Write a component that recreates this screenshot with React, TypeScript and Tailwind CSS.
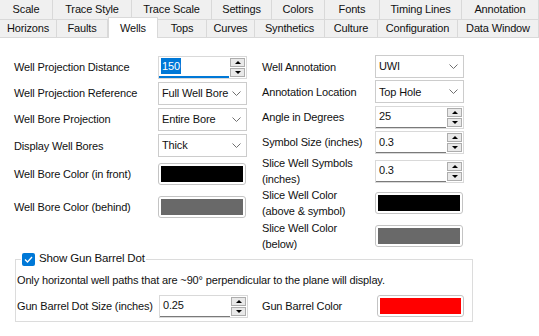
import clsx from "clsx";

const TOP_TABS = [
  { label: "Scale", w: "w-[53px]" },
  { label: "Trace Style", w: "w-[79px]" },
  { label: "Trace Scale", w: "w-[80px]" },
  { label: "Settings", w: "w-[60px]" },
  { label: "Colors", w: "w-[53px]" },
  { label: "Fonts", w: "w-[55px]" },
  { label: "Timing Lines", w: "w-[82px]" },
  { label: "Annotation", w: "w-[77px]" },
];

const BOTTOM_TABS = [
  { label: "Horizons", w: "w-[57px]" },
  { label: "Faults", w: "w-[51px]" },
  { label: "Wells", w: "w-[50px]", active: true },
  { label: "Tops", w: "w-[49px]" },
  { label: "Curves", w: "w-[48px]" },
  { label: "Synthetics", w: "w-[70px]" },
  { label: "Culture", w: "w-[53px]" },
  { label: "Configuration", w: "w-[80px]" },
  { label: "Data Window", w: "w-[81px]" },
];

const Arrow = ({ up }: { up?: boolean }) => (
  <div
    className={clsx(
      "h-0 w-0 border-x-[3px] border-x-transparent",
      up ? "border-b-[3px] border-b-black" : "border-t-[3px] border-t-black"
    )}
  />
);

const SpinButton = ({ up }: { up?: boolean }) => (
  <div className="flex h-[9px] w-[15px] items-center justify-center border border-[#adadad] bg-[#e9e9e9]">
    <Arrow up={up} />
  </div>
);

const NumericBox = ({ value, focused }: { value: string; focused?: boolean }) => (
  <div className="flex h-[23px] w-[89px] border border-[#d9d9d9] bg-white">
    <div
      className={clsx(
        "flex flex-1 items-center pl-[2px]",
        focused ? "border-b-2 border-[#0078d7]" : "border-b border-[#7a7a7a]"
      )}
    >
      {focused ? <span className="bg-[#0078d7] px-px text-white">{value}</span> : <span className="pl-px">{value}</span>}
    </div>
    <div className="flex flex-col justify-center gap-px px-px">
      <SpinButton up />
      <SpinButton />
    </div>
  </div>
);

const ComboBox = ({ value }: { value: string }) => (
  <div className="flex h-[23px] w-[89px] items-center justify-between border border-[#cccccc] bg-white pl-[3px] pr-[5px]">
    <span className="whitespace-nowrap">{value}</span>
    <svg width="9" height="5" viewBox="0 0 9 5" className="shrink-0">
      <path d="M0.5 0.5 L4.5 4.5 L8.5 0.5" stroke="#707070" fill="none" strokeWidth="1" />
    </svg>
  </div>
);

const ColorBox = ({ fill, w = "w-[88px]" }: { fill: string; w?: string }) => (
  <div className={clsx("h-[22px] rounded-[3px] border border-[#c4c4c4] bg-white p-[2px]", w)}>
    <div className={clsx("h-full w-full", fill)} />
  </div>
);

const Row = ({ label, h, lw, children }: { label: React.ReactNode; h: string; lw: string; children: React.ReactNode }) => (
  <div className={clsx("flex items-center", h)}>
    <div className={clsx("shrink-0 leading-[16px]", lw)}>{label}</div>
    {children}
  </div>
);

export default function App() {
  return (
    <div className="h-[336px] w-[539px] overflow-hidden bg-white font-['Liberation_Sans',Arial,sans-serif] text-[11px] tracking-[-0.15px] text-[#111]">
      {/* tab strip */}
      <div className="bg-white">
        <div className="flex h-[20px]">
          {TOP_TABS.map((t) => (
            <div
              key={t.label}
              className={clsx(
                "flex shrink-0 items-center justify-center border-r border-b border-[#d9d9d9] bg-[#f0f0f0]",
                t.w
              )}
            >
              {t.label}
            </div>
          ))}
        </div>
        <div className="flex h-[18px] items-end">
          {BOTTOM_TABS.map((t) =>
            t.active ? (
              <div
                key={t.label}
                className={clsx(
                  "relative z-10 flex h-[21px] shrink-0 items-start justify-center border-x border-t border-[#d9d9d9] bg-white pt-[2px]",
                  t.w
                )}
              >
                {t.label}
              </div>
            ) : (
              <div
                key={t.label}
                className={clsx(
                  "flex h-[18px] shrink-0 items-center justify-center border-r border-b border-[#d9d9d9] bg-[#f0f0f0]",
                  t.w
                )}
              >
                {t.label}
              </div>
            )
          )}
        </div>
      </div>

      {/* form columns */}
      <div className="flex h-[214px] pl-[14px] pt-[16px]">
        <div className="flex w-[233px] flex-col">
          <Row label="Well Projection Distance" h="h-[26px]" lw="w-[144px]">
            <NumericBox value="150" focused />
          </Row>
          <Row label="Well Projection Reference" h="h-[26px]" lw="w-[144px]">
            <ComboBox value="Full Well Bore" />
          </Row>
          <Row label="Well Bore Projection" h="h-[26px]" lw="w-[144px]">
            <ComboBox value="Entire Bore" />
          </Row>
          <Row label="Display Well Bores" h="h-[27px]" lw="w-[144px]">
            <ComboBox value="Thick" />
          </Row>
          <Row label="Well Bore Color (in front)" h="h-[29px]" lw="w-[144px]">
            <ColorBox fill="bg-black" />
          </Row>
          <Row label="Well Bore Color (behind)" h="h-[38px]" lw="w-[144px]">
            <ColorBox fill="bg-[#696969]" />
          </Row>
        </div>

        <div className="ml-[15px] flex w-[202px] flex-col">
          <Row label="Well Annotation" h="h-[26px]" lw="w-[113px]">
            <ComboBox value="UWI" />
          </Row>
          <Row label="Annotation Location" h="h-[26px]" lw="w-[113px]">
            <ComboBox value="Top Hole" />
          </Row>
          <Row label="Angle in Degrees" h="h-[26px]" lw="w-[113px]">
            <NumericBox value="25" />
          </Row>
          <Row label="Symbol Size (inches)" h="h-[26px]" lw="w-[113px]">
            <NumericBox value="0.3" />
          </Row>
          <Row
            label={
              <>
                Slice Well Symbols
                <br />
                (inches)
              </>
            }
            h="h-[32px]"
            lw="w-[113px]"
          >
            <NumericBox value="0.3" />
          </Row>
          <Row
            label={
              <>
                Slice Well Color
                <br />
                (above &amp; symbol)
              </>
            }
            h="h-[32px]"
            lw="w-[113px]"
          >
            <ColorBox fill="bg-black" />
          </Row>
          <Row
            label={
              <>
                Slice Well Color
                <br />
                (below)
              </>
            }
            h="h-[34px]"
            lw="w-[113px]"
          >
            <ColorBox fill="bg-[#696969]" />
          </Row>
        </div>
      </div>

      {/* gun barrel group */}
      <fieldset className="ml-[15px] w-[458px] border border-[#dcdcdc] px-px pb-[3px]">
        <legend className="ml-[4px] flex h-[14px] items-center gap-[4px] px-px">
          <span className="flex h-[13px] w-[13px] items-center justify-center rounded-[2px] bg-[#0078d7]">
            <svg width="9" height="7" viewBox="0 0 9 7">
              <path d="M1 3.5 L3.5 6 L8 1" stroke="white" strokeWidth="1.3" fill="none" />
            </svg>
          </span>
          <span className="text-[11.5px]">Show Gun Barrel Dot</span>
        </legend>
        <div className="flex h-[28px] items-center">
          Only horizontal well paths that are ~90° perpendicular to the plane will display.
        </div>
        <div className="flex h-[24px] items-center">
          <div className="w-[142px] shrink-0">Gun Barrel Dot Size (inches)</div>
          <NumericBox value="0.25" />
          <div className="ml-[14px] w-[115px] shrink-0">Gun Barrel Color</div>
          <ColorBox fill="bg-[#ff0000]" w="w-[87px]" />
        </div>
      </fieldset>
    </div>
  );
}
